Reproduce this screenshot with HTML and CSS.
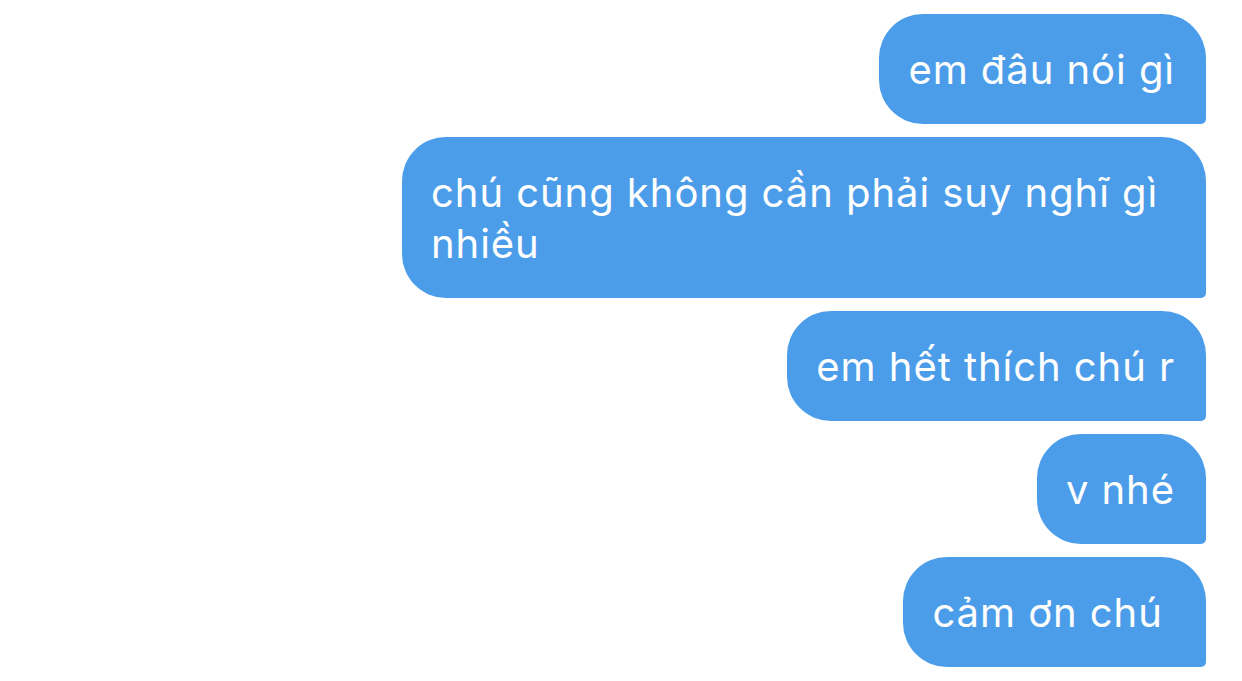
FILE: index.html
```html
<!DOCTYPE html>
<html lang="vi">
<head>
  <meta charset="UTF-8" />
  <title>Tin nhắn</title>
  <link rel="stylesheet" href="styles.css">
</head>
<body>
  <div class="thread">
    <div class="bubble">em đâu nói gì</div>
    <div class="bubble">chú cũng không cần phải suy nghĩ gì nhiều</div>
    <div class="bubble">em hết thích chú r</div>
    <div class="bubble">v nhé</div>
    <div class="bubble">cảm ơn chú </div>
  </div>
</body>
</html>
```

FILE: styles.css
```css
body {
  margin: 0;
  background: #ffffff;
  font-family: Inter, "Noto Sans", sans-serif;
}

.thread {
  display: flex;
  flex-direction: column;
  align-items: flex-end;
  gap: 13px;
  padding: 14px 36px 0 0;
}

.bubble {
  box-sizing: border-box;
  max-width: 804px;
  padding: 30px 31px 29px 29px;
  font-size: 40px;
  letter-spacing: 0.95px;
  line-height: 51px;
  color: #ffffff;
  background: #4b9de9;
  border-radius: 44px 44px 5px 44px;
  white-space: pre-wrap;
}
```
